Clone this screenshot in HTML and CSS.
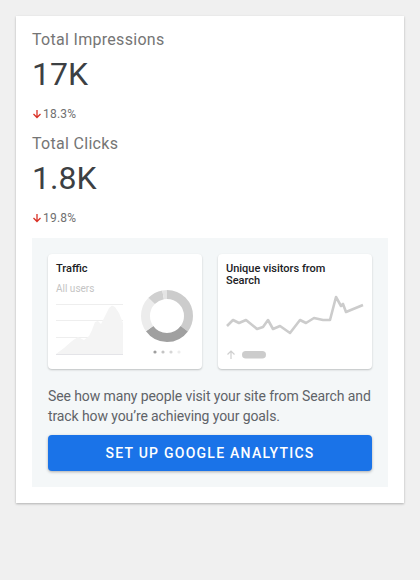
FILE: index.html
```html
<!DOCTYPE html>
<html>
<head>
<meta charset="utf-8">
<link rel="stylesheet" href="styles.css">
</head>
<body>
<div class="card">
  <div class="metric">
    <div class="label">Total Impressions</div>
    <div class="value">17K</div>
    <div class="change"><svg class="arrow" width="10" height="10" viewBox="0 0 10 10"><path d="M5 1v7.5M1.5 5l3.5 3.5L8.5 5" fill="none" stroke="#d93025" stroke-width="1.3"/></svg>18.3%</div>
  </div>
  <div class="metric">
    <div class="label">Total Clicks</div>
    <div class="value">1.8K</div>
    <div class="change"><svg class="arrow" width="10" height="10" viewBox="0 0 10 10"><path d="M5 1v7.5M1.5 5l3.5 3.5L8.5 5" fill="none" stroke="#d93025" stroke-width="1.3"/></svg>19.8%</div>
  </div>
  <div class="promo">
    <div class="minis">
      <div class="mini">
        <div class="mini-title">Traffic</div>
        <div class="mini-sub">All users</div>
        <svg class="mini-art" width="154" height="88" viewBox="48 281 154 88">
          <g stroke="#eeeeee" stroke-width="1">
            <line x1="56" y1="304.5" x2="123" y2="304.5"/>
            <line x1="56" y1="320.5" x2="123" y2="320.5"/>
            <line x1="56" y1="337.5" x2="123" y2="337.5"/>
          </g>
          <path d="M56 354 L64 348 L72 341 L78 337 L84 340 L89 336 L92 330 L95 322 L98 321 L101 324 L105 316 L109 308 L112 305.5 L115 307 L119 313 L123 323 L123 354 Z" fill="#f4f4f4"/>
          <line x1="56" y1="354.5" x2="123" y2="354.5" stroke="#e4e4e8" stroke-width="1"/>
          <g transform="translate(167 316)" fill="none" stroke-width="9">
            <circle r="21.5" stroke="#cccccc" stroke-dasharray="47.2 135.1" transform="rotate(-90)"/>
            <circle r="21.5" stroke="#a0a0a0" stroke-dasharray="40 135.1" stroke-dashoffset="-47.2" transform="rotate(-90)"/>
            <circle r="21.5" stroke="#ececec" stroke-dasharray="30 135.1" stroke-dashoffset="-87.2" transform="rotate(-90)"/>
            <circle r="21.5" stroke="#d0d0d0" stroke-dasharray="13 135.1" stroke-dashoffset="-117.2" transform="rotate(-90)"/>
            <circle r="21.5" stroke="#e4e4e4" stroke-dasharray="4.9 135.1" stroke-dashoffset="-130.2" transform="rotate(-90)"/>
          </g>
          <circle cx="155" cy="352" r="1.6" fill="#9e9e9e"/>
          <circle cx="163" cy="352" r="1.6" fill="#c4c4c4"/>
          <circle cx="171" cy="352" r="1.6" fill="#d6d6d6"/>
          <circle cx="179" cy="352" r="1.6" fill="#ececec"/>
        </svg>
      </div>
      <div class="mini">
        <div class="mini-title">Unique visitors from Search</div>
        <svg class="mini-art" width="154" height="88" viewBox="218 281 154 88">
          <polyline points="227,326 233,320 239,323 246,320 257,329 263,327 268,320 273,329 280,326 290,333 300,320 306,323 314,318 323,320 330,320 336,297 341,306 343,304 346,312 363,305" fill="none" stroke="#cccccc" stroke-width="2.6" stroke-linejoin="round"/>
          <path d="M231 359v-8M227.5 354.5l3.5-3.5 3.5 3.5" fill="none" stroke="#cfcfcf" stroke-width="1.2"/>
          <rect x="242" y="351" width="24" height="7.5" rx="3.75" fill="#cccccc"/>
        </svg>
      </div>
    </div>
    <p class="desc">See how many people visit your site from Search and track how you’re achieving your goals.</p>
    <button class="cta">SET UP GOOGLE ANALYTICS</button>
  </div>
</div>
</body>
</html>
```

FILE: styles.css
```css
html, body {
  margin: 0;
  padding: 0;
}
body {
  background: #f0f0f0;
  font-family: Roboto, "Liberation Sans", sans-serif;
  padding: 16px;
  width: 388px;
}
.card {
  background: #fff;
  box-shadow: 0 1px 2px rgba(0,0,0,0.2), 0 1px 3px rgba(0,0,0,0.08);
  padding: 12px 16px 16px;
}
.metric {
  display: flex;
  flex-direction: column;
}
.label {
  font-size: 16px;
  line-height: 24px;
  letter-spacing: 0.3px;
  color: #757575;
}
.value {
  font-size: 32px;
  line-height: 44px;
  color: #3c4043;
  margin-top: 0;
}
.change {
  font-size: 12px;
  line-height: 16px;
  color: #707070;
  margin-top: 10px;
  margin-bottom: 10px;
  display: flex;
  align-items: center;
  letter-spacing: 0.2px;
}
.arrow {
  margin-right: 1px;
}
.promo {
  background: #f4f7f8;
  padding: 16px;
  margin-top: 2px;
}
.minis {
  display: flex;
  gap: 16px;
}
.mini {
  width: 154px;
  height: 115px;
  background: #fff;
  border-radius: 4px;
  box-shadow: 0 1px 2px rgba(0,0,0,0.22);
  position: relative;
  overflow: hidden;
}
.mini-title {
  position: relative;
  font-weight: 500;
  font-size: 11px;
  line-height: 12px;
  color: #202124;
  padding: 9px 8px 0;
  width: 120px;
}
.mini-sub {
  position: relative;
  font-size: 10px;
  line-height: 12px;
  color: #c4c4c4;
  margin-top: 8px;
  padding-left: 8px;
}
.mini-art {
  position: absolute;
  left: 0;
  top: 27px;
}
.desc {
  margin: 17px 0 0;
  font-size: 14px;
  line-height: 20px;
  letter-spacing: -0.1px;
  color: #5f6368;
}
.cta {
  display: block;
  width: 100%;
  height: 36px;
  margin-top: 9px;
  border: none;
  border-radius: 4px;
  background: #1a73e8;
  color: #fff;
  font-family: Roboto, sans-serif;
  font-weight: 500;
  font-size: 14px;
  letter-spacing: 1.25px;
  box-shadow: 0 1px 3px rgba(0,0,0,0.3);
}
```
